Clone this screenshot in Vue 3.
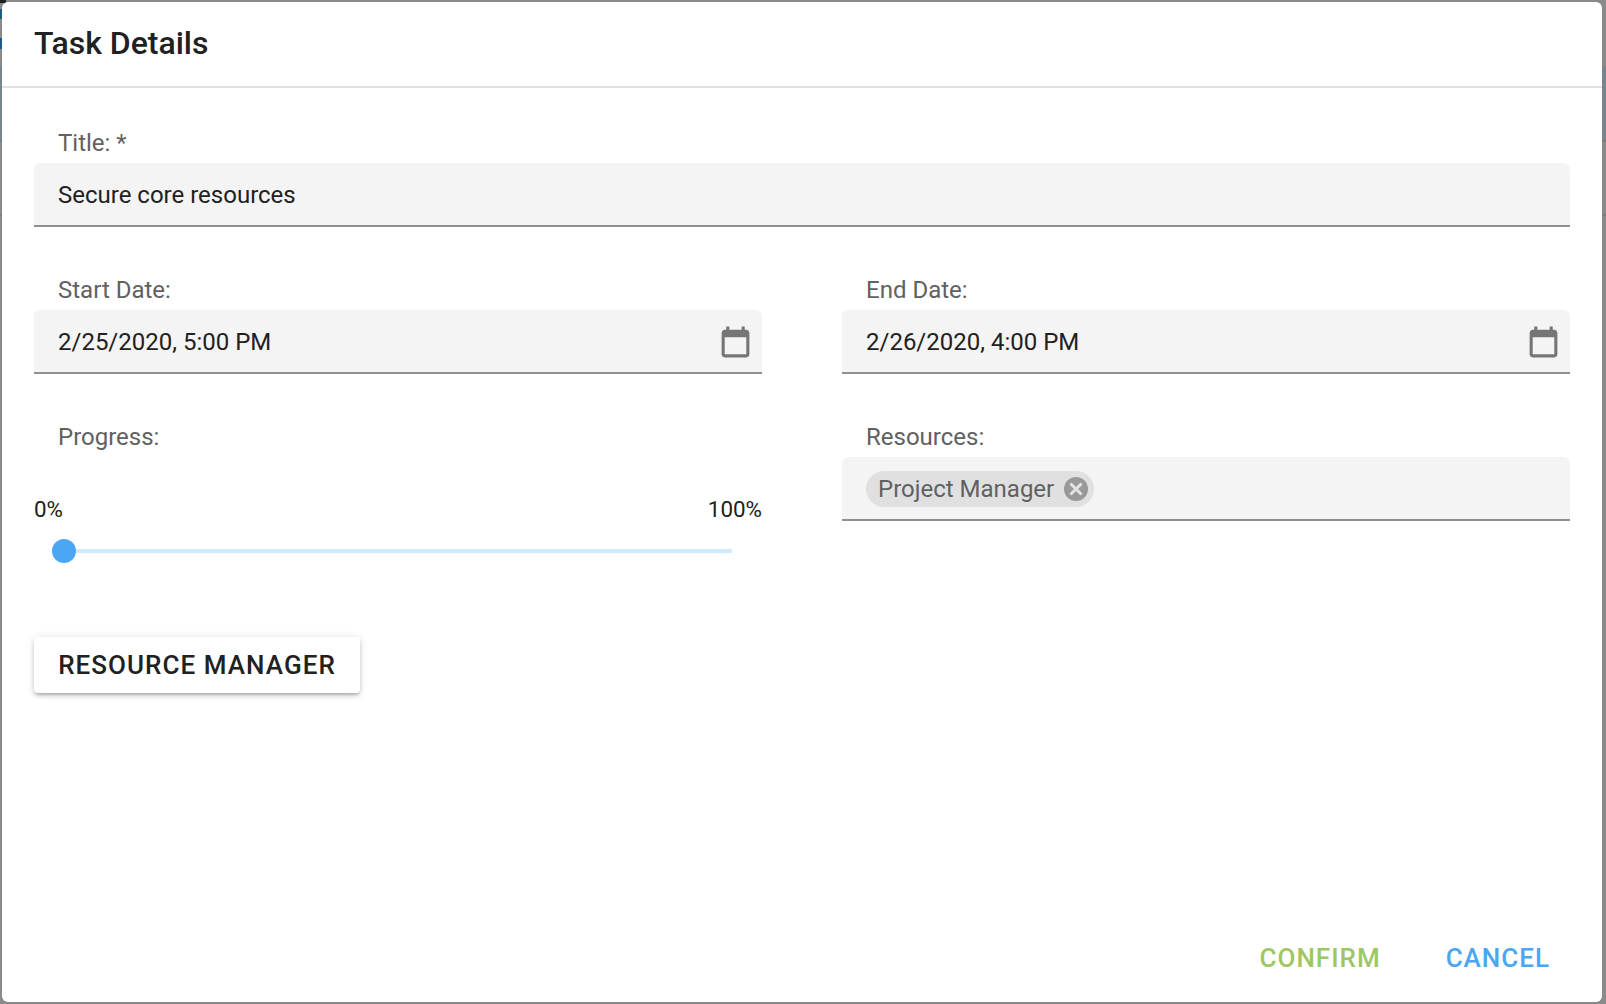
<script setup>
const dateFields = [
  { label: 'Start Date:', value: '2/25/2020, 5:00 PM' },
  { label: 'End Date:', value: '2/26/2020, 4:00 PM' },
]
</script>

<template>
  <div class="page">
    <section class="dialog">
      <header class="head"><h1>Task Details</h1></header>
      <main class="body">
        <div class="field">
          <label>Title: *</label>
          <div class="box">Secure core resources</div>
        </div>
        <div class="cols dates">
          <div v-for="f in dateFields" :key="f.label" class="field">
            <label>{{ f.label }}</label>
            <div class="box">
              <span>{{ f.value }}</span>
              <svg class="cal" viewBox="0 0 24 24" width="37" height="37" fill="#757575">
                <path d="M19 3h-1V1h-2v2H8V1H6v2H5c-1.11 0-1.99.9-1.99 2L3 19c0 1.1.89 2 2 2h14c1.1 0 2-.9 2-2V5c0-1.1-.9-2-2-2zm0 16H5V8h14v11z" />
              </svg>
            </div>
          </div>
        </div>
        <div class="cols lower">
          <div class="field">
            <label>Progress:</label>
            <div class="range"><span>0%</span><span>100%</span></div>
            <div class="slider"><i class="thumb"></i><i class="track"></i></div>
          </div>
          <div class="field">
            <label>Resources:</label>
            <div class="box chips">
              <span class="chip">
                Project Manager
                <svg viewBox="0 0 24 24" width="24" height="24">
                  <circle cx="12" cy="12" r="12" fill="#999" />
                  <path d="M6.5 6.5l11 11M17.5 6.5l-11 11" stroke="#e3e3e3" stroke-width="3" fill="none" />
                </svg>
              </span>
            </div>
          </div>
        </div>
        <button class="manager" type="button">RESOURCE MANAGER</button>
      </main>
      <footer class="foot">
        <button class="confirm" type="button">CONFIRM</button>
        <button class="cancel" type="button">CANCEL</button>
      </footer>
    </section>
  </div>
</template>

<style>
html, body { margin: 0; background: #8a8a8a; }
</style>

<style scoped>
.page {
  width: 1606px;
  height: 1004px;
  padding: 2px 4px 2px 2px;
  box-sizing: border-box;
  font-family: Roboto, "Liberation Sans", sans-serif;
  overflow: hidden;
  background-color: #8a8a8a;
  background-repeat: no-repeat;
  background-image:
    linear-gradient(#222, #222),
    linear-gradient(#1f5a85, #1f5a85),
    linear-gradient(#1f5a85, #1f5a85),
    linear-gradient(#78868c, #78868c),
    linear-gradient(#7c7c7c, #7c7c7c),
    linear-gradient(#7c7c7c, #7c7c7c);
  background-size:
    6px 3px,
    2px 10px,
    2px 11px,
    100% 74px,
    100% 2px,
    100% 2px;
  background-position:
    0 0,
    0 9px,
    0 38px,
    0 66px,
    0 140px,
    0 214px;
}
.dialog {
  height: 1000px;
  background: #fff;
  border-radius: 6px;
  display: flex;
  flex-direction: column;
}
.head {
  flex: none;
  border-bottom: 2px solid #e0e0e0;
  padding: 0 32px 2px;
  height: 82px;
  display: flex;
  align-items: center;
}
h1 {
  margin: 0;
  font-size: 32px;
  font-weight: 500;
  color: #212121;
}
.body {
  flex: 1;
  padding: 36px 32px 0;
  display: flex;
  flex-direction: column;
}
.field { display: flex; flex-direction: column; min-width: 0; }
label {
  height: 39px;
  padding-left: 24px;
  font-size: 24px;
  line-height: 38px;
  color: #616161;
}
.box {
  height: 64px;
  box-sizing: border-box;
  background: #f4f4f4;
  border-bottom: 2px solid #8f8f8f;
  border-radius: 6px 6px 0 0;
  padding: 2px 8px 0 24px;
  display: flex;
  align-items: center;
  justify-content: space-between;
  font-size: 24px;
  color: #212121;
}
.cal { margin-top: 2px; }
.cols {
  display: grid;
  grid-template-columns: 728px 728px;
  column-gap: 80px;
}
.dates { margin-top: 44px; }
.lower { margin-top: 44px; }
.range {
  display: flex;
  justify-content: space-between;
  font-size: 22.4px;
  line-height: 24px;
  color: #212121;
  margin-top: 40px;
}
.slider {
  display: flex;
  align-items: center;
  margin: 18px 30px 0 18px;
}
.thumb { width: 24px; height: 24px; border-radius: 50%; background: #4ba6f3; flex: none; }
.track { flex: 1; height: 4px; background: #d2e8fb; }
.chips { justify-content: flex-start; }
.chip {
  height: 36px;
  border-radius: 18px;
  background: #e0e0e0;
  padding: 0 6px 0 12px;
  display: flex;
  align-items: center;
  gap: 10px;
  color: #616161;
  font-size: 24px;
}
.manager {
  align-self: flex-start;
  width: 326px;
  height: 56px;
  margin-top: 74px;
  border: 0;
  border-radius: 4px;
  background: #fff;
  box-shadow: 0 3px 3px -2px rgba(0,0,0,.2), 0 3px 4px rgba(0,0,0,.14), 0 1px 8px rgba(0,0,0,.12);
  font: 500 26px Roboto, sans-serif;
  letter-spacing: 1.05px;
  color: #212121;
  padding: 0;
}
.foot {
  flex: none;
  display: flex;
  justify-content: flex-end;
  gap: 65px;
  padding: 0 52px 25px 0;
}
.foot button {
  border: 0;
  background: none;
  padding: 0;
  font: 500 26px/38px Roboto, sans-serif;
  letter-spacing: 1px;
}
.confirm { color: #9cc763; }
.cancel { color: #4ba6f3; }
</style>
